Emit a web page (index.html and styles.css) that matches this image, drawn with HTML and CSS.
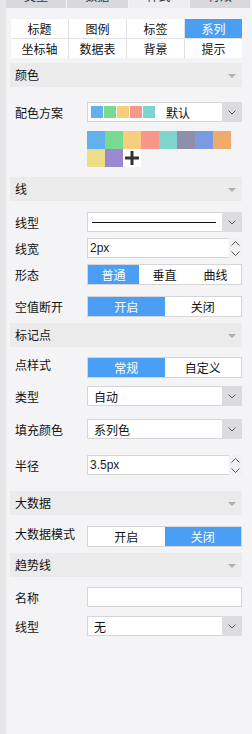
FILE: index.html
```html
<!DOCTYPE html>
<html>
    <head>
        <meta charset="UTF-8">
        <title>系列设置</title>
        <link rel="stylesheet" href="styles.css">
    </head>
    <body>
        <div class="strip"></div>
        <div class="panel">

            <div class="tabs">
                <div class="tab">类型</div>
                <div class="tab">数据</div>
                <div class="tab active">样式</div>
                <div class="tab">特效</div>
            </div>

            <div class="subtabs">
                <div class="subtab">标题</div>
                <div class="subtab">图例</div>
                <div class="subtab">标签</div>
                <div class="subtab active">系列</div>
                <div class="subtab">坐标轴</div>
                <div class="subtab">数据表</div>
                <div class="subtab">背景</div>
                <div class="subtab">提示</div>
            </div>

            <!-- 颜色 -->
            <div class="section-head g5">颜色<span class="tri"></span></div>

            <div class="row g15">
                <div class="label">配色方案</div>
                <div class="select">
                    <div class="value scheme">
                        <span class="sw" style="background:#63b0ef"></span>
                        <span class="sw" style="background:#77da8e"></span>
                        <span class="sw" style="background:#f8cd7e"></span>
                        <span class="sw" style="background:#f89789"></span>
                        <span class="sw" style="background:#7ed5cf"></span>
                        <span class="scheme-name">默认</span>
                    </div>
                    <div class="arrow"><svg width="8" height="5" viewBox="0 0 8 5"><polyline points="0.5,0.5 4,4 7.5,0.5" fill="none" stroke="#555" stroke-width="1"/></svg></div>
                </div>
            </div>

            <div class="palette g9">
                <span style="background:#63b0ef"></span>
                <span style="background:#77da8e"></span>
                <span style="background:#f8cd7e"></span>
                <span style="background:#f89789"></span>
                <span style="background:#7ed5cf"></span>
                <span style="background:#8f8faa"></span>
                <span style="background:#7a9be2"></span>
                <span style="background:#eeab6d"></span>
                <span style="background:#ecdd86"></span>
                <span style="background:#9b88ce"></span>
                <span class="add"><svg width="14" height="14" viewBox="0 0 14 14"><rect x="5.5" y="0" width="3" height="14" fill="#333"/><rect x="0" y="5.5" width="14" height="3" fill="#333"/></svg></span>
            </div>

            <!-- 线 -->
            <div class="section-head g10">线<span class="tri"></span></div>

            <div class="row g11">
                <div class="label">线型</div>
                <div class="select">
                    <div class="value"><span class="line-sample"></span></div>
                    <div class="arrow"><svg width="8" height="5" viewBox="0 0 8 5"><polyline points="0.5,0.5 4,4 7.5,0.5" fill="none" stroke="#555" stroke-width="1"/></svg></div>
                </div>
            </div>

            <div class="row g6">
                <div class="label">线宽</div>
                <div class="number">
                    <div class="value">2px</div>
                    <div class="spin">
                        <svg width="9" height="5" viewBox="0 0 9 5"><polyline points="0.5,4.5 4.5,0.5 8.5,4.5" fill="none" stroke="#555" stroke-width="1"/></svg>
                        <svg width="9" height="5" viewBox="0 0 9 5"><polyline points="0.5,0.5 4.5,4.5 8.5,0.5" fill="none" stroke="#555" stroke-width="1"/></svg>
                    </div>
                </div>
            </div>

            <div class="row g6">
                <div class="label">形态</div>
                <div class="seg">
                    <div class="opt on">普通</div>
                    <div class="opt">垂直</div>
                    <div class="opt">曲线</div>
                </div>
            </div>

            <div class="row g11">
                <div class="label">空值断开</div>
                <div class="seg">
                    <div class="opt on">开启</div>
                    <div class="opt">关闭</div>
                </div>
            </div>

            <!-- 标记点 -->
            <div class="section-head g6">标记点<span class="tri"></span></div>

            <div class="row g10">
                <div class="label raised">点样式</div>
                <div class="seg">
                    <div class="opt on">常规</div>
                    <div class="opt">自定义</div>
                </div>
            </div>

            <div class="row g8">
                <div class="label">类型</div>
                <div class="select">
                    <div class="value">自动</div>
                    <div class="arrow"><svg width="8" height="5" viewBox="0 0 8 5"><polyline points="0.5,0.5 4,4 7.5,0.5" fill="none" stroke="#555" stroke-width="1"/></svg></div>
                </div>
            </div>

            <div class="row g13">
                <div class="label">填充颜色</div>
                <div class="select">
                    <div class="value">系列色</div>
                    <div class="arrow"><svg width="8" height="5" viewBox="0 0 8 5"><polyline points="0.5,0.5 4,4 7.5,0.5" fill="none" stroke="#555" stroke-width="1"/></svg></div>
                </div>
            </div>

            <div class="row g16">
                <div class="label">半径</div>
                <div class="number">
                    <div class="value">3.5px</div>
                    <div class="spin">
                        <svg width="9" height="5" viewBox="0 0 9 5"><polyline points="0.5,4.5 4.5,0.5 8.5,4.5" fill="none" stroke="#555" stroke-width="1"/></svg>
                        <svg width="9" height="5" viewBox="0 0 9 5"><polyline points="0.5,0.5 4.5,4.5 8.5,0.5" fill="none" stroke="#555" stroke-width="1"/></svg>
                    </div>
                </div>
            </div>

            <!-- 大数据 -->
            <div class="section-head g16">大数据<span class="tri"></span></div>

            <div class="row g11">
                <div class="label raised">大数据模式</div>
                <div class="seg">
                    <div class="opt">开启</div>
                    <div class="opt on">关闭</div>
                </div>
            </div>

            <!-- 趋势线 -->
            <div class="section-head g6">趋势线<span class="tri"></span></div>

            <div class="row g10">
                <div class="label">名称</div>
                <div class="text-input"></div>
            </div>

            <div class="row g9">
                <div class="label">线型</div>
                <div class="select">
                    <div class="value">无</div>
                    <div class="arrow"><svg width="8" height="5" viewBox="0 0 8 5"><polyline points="0.5,0.5 4,4 7.5,0.5" fill="none" stroke="#555" stroke-width="1"/></svg></div>
                </div>
            </div>

        </div>
    </body>
</html>
```

FILE: styles.css
```css
/* base */
body {
    margin: 0;
    display: flex;
    min-height: 734px;
    font-family: "Noto Sans CJK SC", "Liberation Sans", sans-serif;
    font-size: 12px;
    color: #111;
    background-color: #f4f4f6;
    overflow: hidden;
}

.strip {
    width: 6px;
    background-color: #e6e6e6;
}

.panel {
    flex: 1;
    padding: 0 10px 0 4px;
}

/* top tabs, scrolled half out of view */
.tabs {
    display: flex;
    gap: 1px;
    height: 22px;
    margin: -14px -10px 0 -4px;
    padding-right: 2px;
}

.tab {
    flex: 1;
    background-color: #d9d9dd;
    text-align: center;
    line-height: 20px;
    color: #333;
}

.tab.active {
    background-color: #eeeef0;
}

/* sub tabs */
.subtabs {
    display: grid;
    grid-template-columns: repeat(4, 1fr);
    gap: 1px;
    background-color: #e2e2e4;
    margin: 11px 0 0 1px;
}

.subtab {
    background-color: #fff;
    height: 19px;
    line-height: 19px;
    text-align: center;
}

.subtab.active {
    background-color: #4a9ff5;
    color: #fff;
}

/* section headers */
.section-head {
    position: relative;
    height: 24px;
    line-height: 24px;
    padding-left: 5px;
    background-color: #ebebec;
}

.tri {
    position: absolute;
    right: 6px;
    top: 11px;
    border-left: 4px solid transparent;
    border-right: 4px solid transparent;
    border-top: 4px solid #b0b0b0;
}

/* rows */
.row {
    display: flex;
    align-items: center;
}

.label {
    width: 72px;
    padding-left: 5px;
    flex-shrink: 0;
}

.label.raised {
    align-self: flex-start;
    margin-top: -1px;
}

.select, .number, .text-input {
    flex: 1;
    display: flex;
    height: 20px;
    box-sizing: border-box;
    border: 1px solid #d6d6d8;
    background-color: #fff;
}

.select {
    border-right: none;
}

.value {
    flex: 1;
    display: flex;
    align-items: center;
    padding-left: 6px;
}

.number .value {
    padding-left: 2px;
    font-family: "Liberation Sans", sans-serif;
    color: #1a1a2a;
}

.arrow {
    width: 20px;
    margin: -1px 0;
    background-color: #dcdcdf;
    display: flex;
    align-items: center;
    justify-content: center;
}

.spin {
    width: 13px;
    margin: -1px -1px -1px 0;
    background-color: #f0f0f2;
    display: flex;
    flex-direction: column;
    align-items: center;
    justify-content: center;
    gap: 5px;
}

.scheme {
    padding-left: 3px;
    gap: 1px;
}

.sw {
    width: 12px;
    height: 12px;
}

.scheme-name {
    margin-left: 10px;
}

.line-sample {
    width: 124px;
    height: 1px;
    margin-left: -2px;
    background-color: #111;
}

/* segmented buttons */
.seg {
    flex: 1;
    display: flex;
    height: 21px;
    box-sizing: border-box;
    border: 1px solid #d6d6d8;
    background-color: #fff;
}

.opt {
    flex: 1;
    text-align: center;
    line-height: 19px;
}

.opt.on {
    background-color: #4a9ff5;
    color: #fff;
}

/* colour palette */
.palette {
    display: grid;
    grid-template-columns: repeat(8, 18px);
    grid-auto-rows: 18px;
    margin-left: 77px;
}

.palette .add {
    background-color: #fff;
    display: flex;
    align-items: center;
    justify-content: center;
}

/* spacing between blocks */
.g5 { margin-top: 5px; }
.g6 { margin-top: 6px; }
.g8 { margin-top: 8px; }
.g9 { margin-top: 9px; }
.g10 { margin-top: 10px; }
.g11 { margin-top: 11px; }
.g13 { margin-top: 13px; }
.g15 { margin-top: 15px; }
.g16 { margin-top: 16px; }
```
